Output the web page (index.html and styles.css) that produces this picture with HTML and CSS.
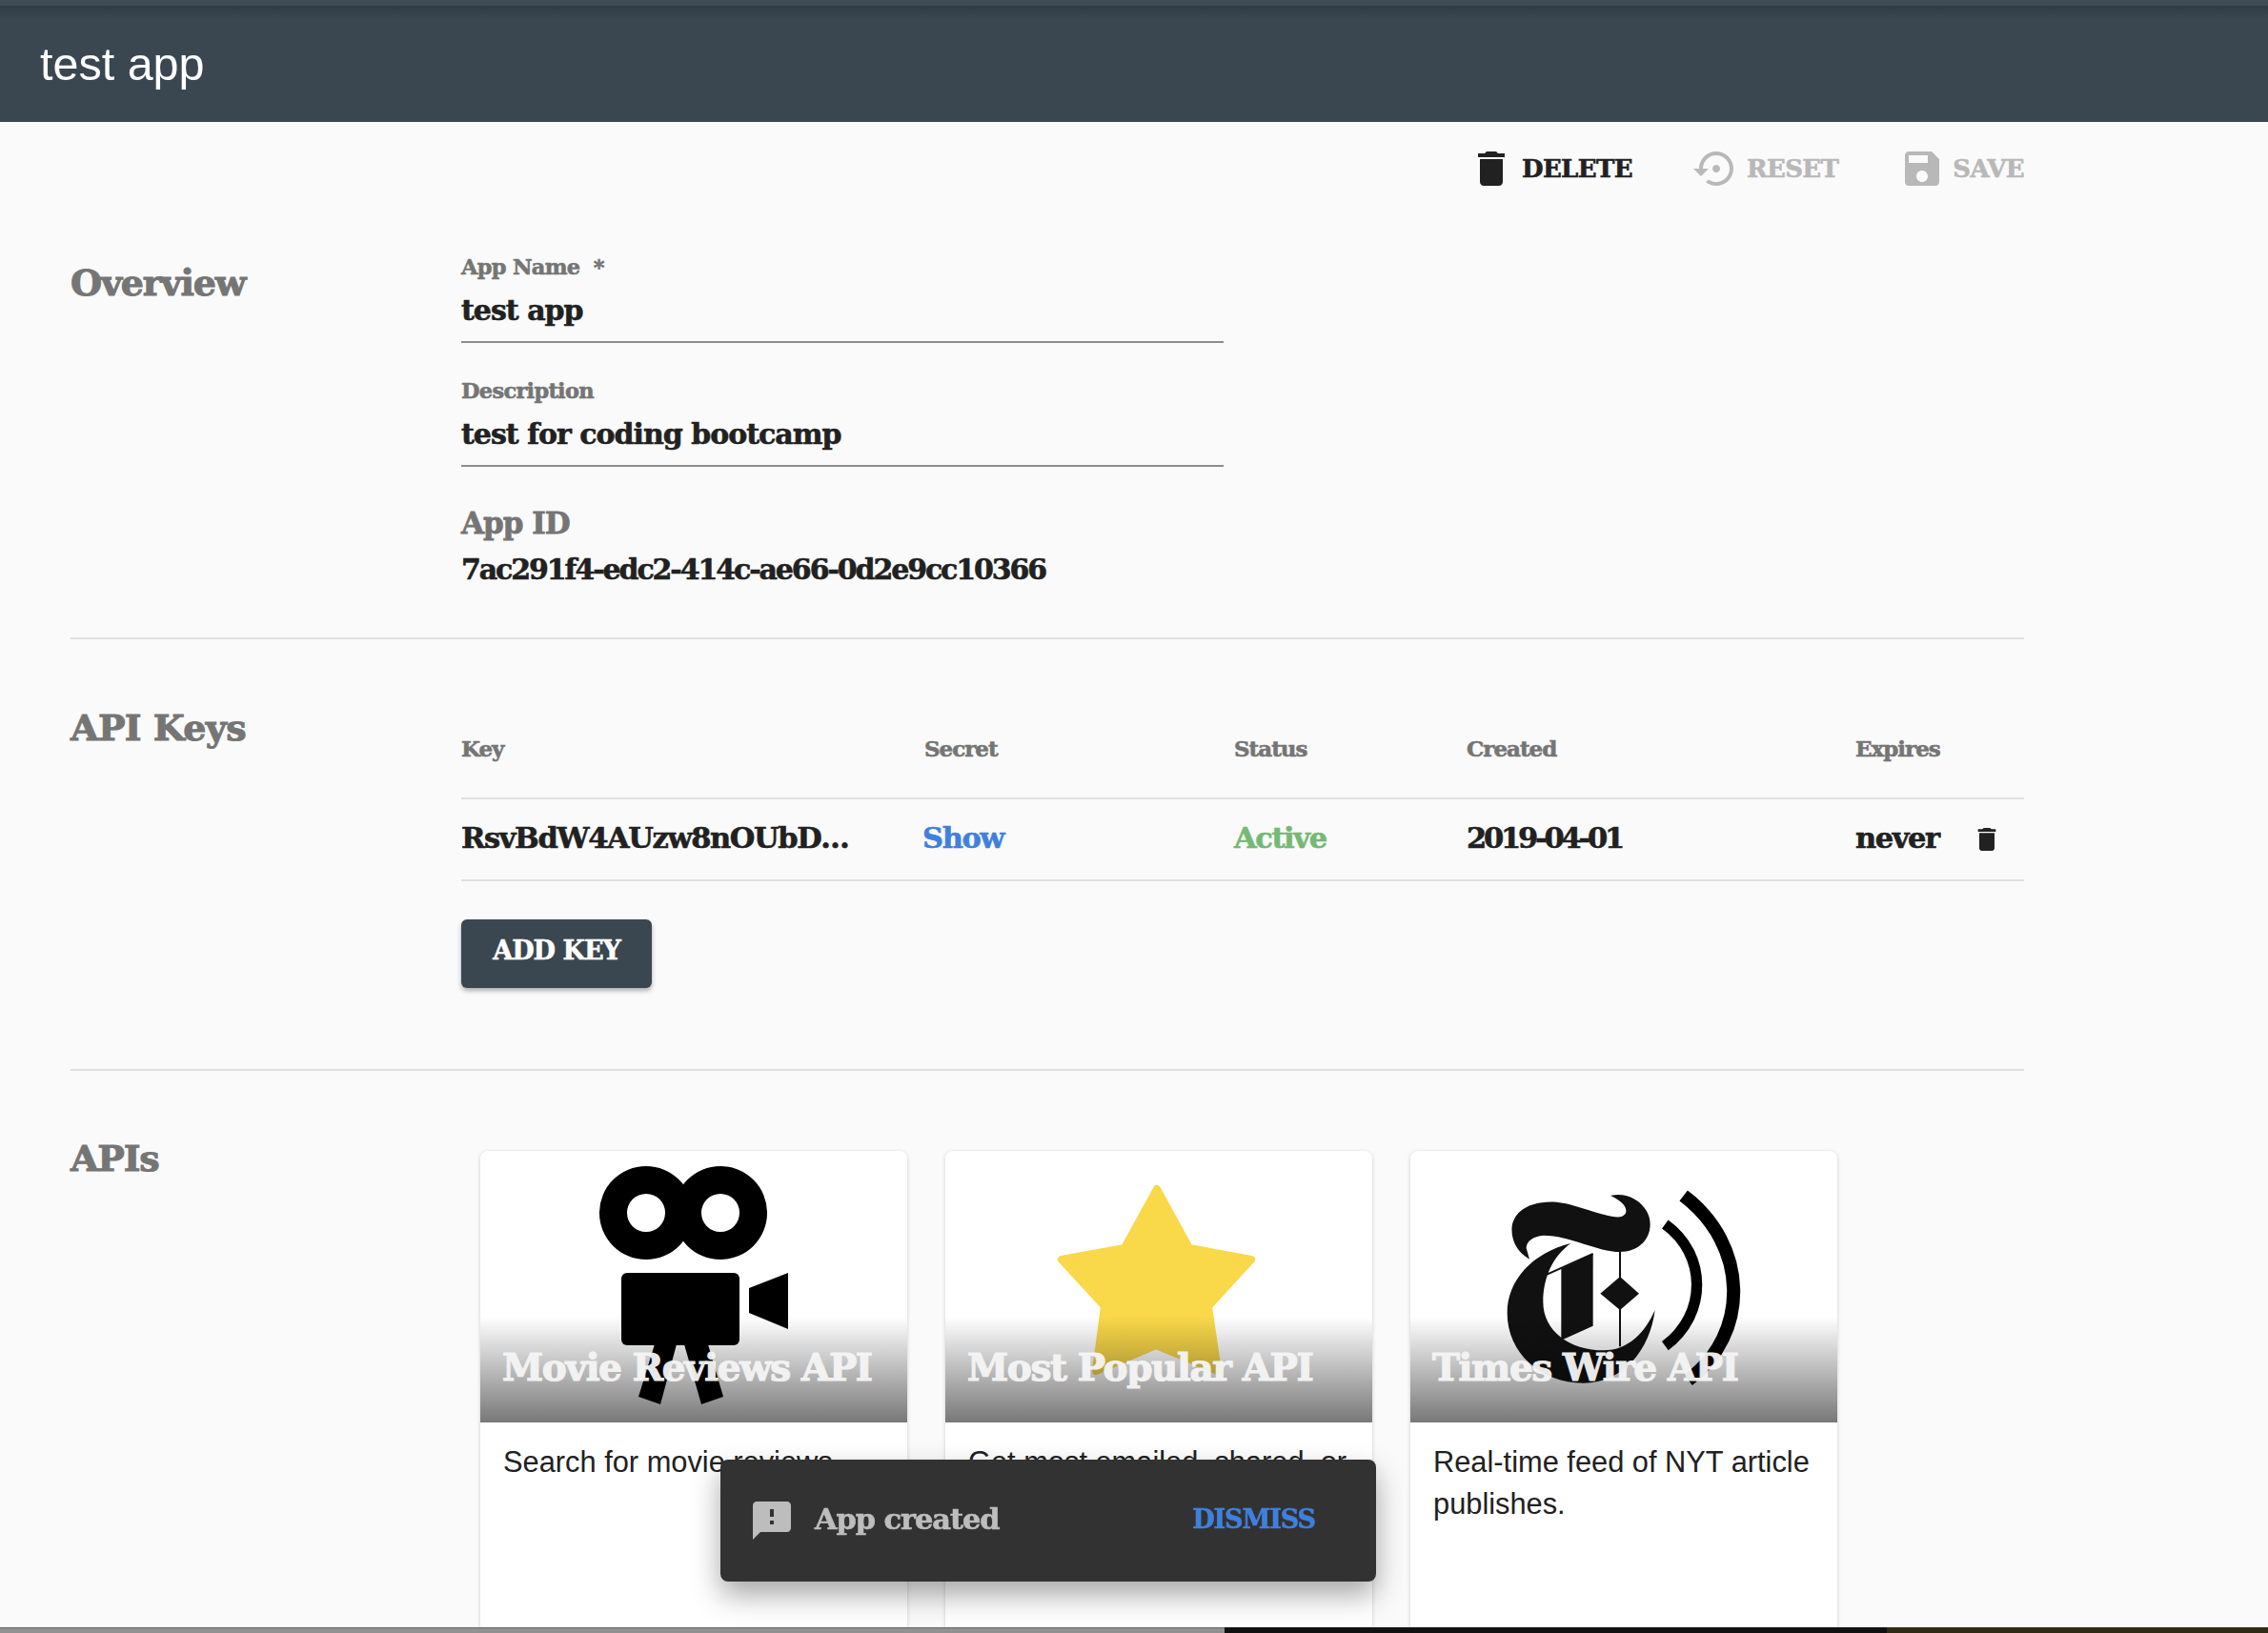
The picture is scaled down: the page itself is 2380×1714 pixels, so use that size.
FILE: index.html
```html
<!DOCTYPE html>
<html lang="en">
<head>
  <meta charset="UTF-8">
  <title>test app</title>
  <link rel="stylesheet" href="styles.css">
</head>
<body>
  <header class="app-bar">test app</header>

  <main class="content">
    <div class="toolbar">
      <button class="tool-btn">
        <svg class="icon" viewBox="0 0 24 24"><path d="M6 19c0 1.1.9 2 2 2h8c1.1 0 2-.9 2-2V7H6v12zM19 4h-3.5l-1-1h-5l-1 1H5v2h14V4z"/></svg>
        DELETE
      </button>
      <button class="tool-btn disabled">
        <svg class="icon" viewBox="0 0 24 24"><path d="M14 12c0-1.1-.9-2-2-2s-2 .9-2 2 .9 2 2 2 2-.9 2-2zm-2-9c-4.97 0-9 4.03-9 9H0l4 4 4-4H5c0-3.87 3.13-7 7-7s7 3.13 7 7-3.13 7-7 7c-1.51 0-2.91-.49-4.06-1.3l-1.42 1.44C8.04 20.3 9.94 21 12 21c4.97 0 9-4.03 9-9s-4.03-9-9-9z"/></svg>
        RESET
      </button>
      <button class="tool-btn disabled">
        <svg class="icon" viewBox="0 0 24 24"><path d="M17 3H5c-1.11 0-2 .9-2 2v14c0 1.1.89 2 2 2h14c1.1 0 2-.9 2-2V7l-4-4zm-5 16c-1.66 0-3-1.34-3-3s1.34-3 3-3 3 1.34 3 3-1.34 3-3 3zm3-10H5V5h10v4z"/></svg>
        SAVE
      </button>
    </div>

    <section class="section overview">
      <h2 class="section-title">Overview</h2>
      <div class="fields">
        <div class="field">
          <div class="field-label">App Name &nbsp;*</div>
          <div class="field-value">test app</div>
        </div>
        <div class="field">
          <div class="field-label">Description</div>
          <div class="field-value">test for coding bootcamp</div>
        </div>
        <div class="app-id">
          <div class="app-id-label">App ID</div>
          <div class="app-id-value">7ac291f4-edc2-414c-ae66-0d2e9cc10366</div>
        </div>
      </div>
    </section>

    <section class="section keys">
      <h2 class="section-title">API Keys</h2>
      <div>
        <div class="key-row key-head">
          <span>Key</span><span>Secret</span><span>Status</span><span>Created</span><span>Expires</span>
        </div>
        <div class="key-row key-body">
          <span>RsvBdW4AUzw8nOUbD…</span>
          <span class="link">Show</span>
          <span class="active">Active</span>
          <span class="date">2019-04-01</span>
          <span class="expires">never
            <svg class="icon-small" viewBox="0 0 24 24"><path d="M6 19c0 1.1.9 2 2 2h8c1.1 0 2-.9 2-2V7H6v12zM19 4h-3.5l-1-1h-5l-1 1H5v2h14V4z"/></svg>
          </span>
        </div>
        <button class="add-key">ADD KEY</button>
      </div>
    </section>

    <section class="section apis">
      <h2 class="section-title">APIs</h2>
      <div class="cards">
        <article class="card">
          <div class="card-image">
            <svg viewBox="0 0 448 285">
              <path fill-rule="evenodd" d="M174 16a49 49 0 1 0 0 98a49 49 0 1 0 0-98zM174 45a20 20 0 1 1 0 40a20 20 0 1 1 0-40z"/>
              <path fill-rule="evenodd" d="M252 16a49 49 0 1 0 0 98a49 49 0 1 0 0-98zM252 45a20 20 0 1 1 0 40a20 20 0 1 1 0-40z"/>
              <rect x="148" y="128" width="124" height="76" rx="6"/>
              <path d="M282 144L323 128V187L282 170Z"/>
              <path d="M183 203H206L189 266L166 258Z"/>
              <path d="M214 203H239L255 258L232 266Z"/>
            </svg>
            <h3 class="card-title">Movie Reviews API</h3>
          </div>
          <p class="card-text">Search for movie reviews.</p>
        </article>
        <article class="card">
          <div class="card-image">
            <svg viewBox="0 0 448 285">
              <path class="star" d="M222 40L256 102L321 114L276 163L286 231L221 204L158 231L167 163L122 114L188 102Z"/>
            </svg>
            <h3 class="card-title">Most Popular API</h3>
          </div>
          <p class="card-text">Get most emailed, shared, or viewed articles.</p>
        </article>
        <article class="card">
          <div class="card-image">
            <svg viewBox="30 54 1344 855">
              <g fill="#111">
                <path d="M405 395C370 375 345 340 350 290C360 235 420 210 490 215C560 222 640 265 690 262C715 258 725 225 660 195C720 180 785 225 785 285C785 340 740 372 690 372C620 372 530 320 450 320C415 322 395 340 395 360Z"/>
                <path d="M535 345C415 375 335 460 335 565C335 690 440 785 575 785C700 785 785 680 800 555C770 625 715 682 640 682C530 682 448 620 448 530C448 450 480 385 535 345Z"/>
                <path d="M505 425L605 378V605L505 650Z"/>
                <path d="M690 450L750 503L690 555L628 503Z"/>
                <path d="M455 445L605 378M690 372V670" stroke="#111" stroke-width="6"/>
              </g>
              <path d="M832 285C965 380 965 570 832 668" fill="none" stroke="#000" stroke-width="34"/>
              <path d="M890 195C1095 350 1100 630 905 775" fill="none" stroke="#000" stroke-width="42"/>
            </svg>
            <h3 class="card-title">Times Wire API</h3>
          </div>
          <p class="card-text">Real-time feed of NYT article publishes.</p>
        </article>
      </div>
    </section>
  </main>

  <div class="toast">
    <svg class="icon" viewBox="0 0 24 24"><path d="M20 2H4c-1.1 0-1.99.9-1.99 2L2 22l4-4h14c1.1 0 2-.9 2-2V4c0-1.1-.9-2-2-2zm-7 12h-2v-2h2v2zm0-4h-2V6h2v4z"/></svg>
    <span class="toast-text">App created</span>
    <span class="toast-action">DISMISS</span>
  </div>

  <div class="desktop-strip"><span class="strip-light"></span><span class="strip-dark"></span><span class="strip-olive"></span></div>
</body>
</html>
```

FILE: styles.css
```css
html, body {
  margin: 0;
  height: 1714px;
  overflow: hidden;
}

body {
  background: #fafafa;
  color: #212121;
  font-family: 'DejaVu Serif', serif;
  font-weight: bold;
  -webkit-text-stroke: .6px currentColor;
}

.app-bar {
  height: 122px;
  border-top: 6px solid #3f4c56;
  padding-left: 42px;
  background: linear-gradient(#323c44, #3a4750 14px);
  color: #fff;
  font-family: 'Liberation Sans', sans-serif;
  font-weight: normal;
  font-size: 48.5px;
  line-height: 122px;
  -webkit-text-stroke: 0;
}

.content {
  width: 2050px;
  margin-left: 74px;
}

.toolbar {
  display: flex;
  justify-content: flex-end;
  gap: 64px;
  height: 98px;
  padding-top: 25px;
  box-sizing: border-box;
}

.tool-btn {
  display: flex;
  align-items: center;
  gap: 8px;
  height: 48px;
  padding: 0;
  border: none;
  background: none;
  color: #212121;
  font-family: inherit;
  font-weight: bold;
  font-size: 26px;
  letter-spacing: -.6px;
  -webkit-text-stroke: .6px currentColor;
}

.tool-btn.disabled {
  color: #b8b8b8;
}

.icon {
  width: 48px;
  height: 48px;
  fill: currentColor;
  flex: none;
  stroke-width: 0;
}

.section {
  display: grid;
  grid-template-columns: 410px 1fr;
  border-bottom: 2px solid #e0e0e0;
}

.section-title {
  margin: 0;
  color: #757575;
  font-size: 38px;
  letter-spacing: -1.2px;
  line-height: 44px;
  -webkit-text-stroke: 1px currentColor;
}

.overview {
  height: 445px;
  box-sizing: border-box;
}

.overview .section-title {
  margin-top: 49px;
}

.fields {
  width: 800px;
  padding-top: 39px;
}

.field {
  height: 95px;
  box-sizing: border-box;
  border-bottom: 2px solid #8c8c8c;
  margin-bottom: 35px;
}

.field-label {
  color: #757575;
  font-size: 22.5px;
  line-height: 30px;
  letter-spacing: -.7px;
}

.field-value {
  font-size: 30px;
  line-height: 40px;
  letter-spacing: -1px;
  margin-top: 11px;
}

.app-id {
  padding-top: 4px;
}

.app-id-label {
  color: #757575;
  font-size: 31px;
  line-height: 40px;
  letter-spacing: -1px;
  -webkit-text-stroke: .8px currentColor;
}

.app-id-value {
  font-size: 30px;
  line-height: 40px;
  letter-spacing: -2.1px;
  margin-top: 9px;
}

.keys {
  height: 453px;
  box-sizing: border-box;
}

.keys .section-title {
  margin-top: 71px;
  letter-spacing: -.6px;
}

.key-row {
  display: grid;
  grid-template-columns: 486px 325px 244px 408px 1fr;
  align-items: center;
  border-bottom: 2px solid #e0e0e0;
}

.key-head {
  height: 168px;
  box-sizing: border-box;
  padding-top: 62px;
  color: #757575;
  font-size: 23px;
  letter-spacing: -1px;
}

.key-body {
  height: 86px;
  padding-bottom: 5px;
  box-sizing: border-box;
  font-size: 30.5px;
  letter-spacing: -1.4px;
}

.link {
  color: #3f80dd;
  margin-left: -2px;
}

.active {
  color: #74b974;
}

.date {
  letter-spacing: -3.2px;
}

.expires {
  display: flex;
  align-items: center;
  gap: 34px;
}

.icon-small {
  width: 32px;
  height: 32px;
  fill: currentColor;
  margin-top: 4px;
}

.add-key {
  display: block;
  width: 200px;
  height: 72px;
  margin-top: 40px;
  padding: 0 0 8px;
  border: none;
  border-radius: 6px;
  background: #3a4750;
  color: #fff;
  font-family: inherit;
  font-weight: bold;
  font-size: 27px;
  letter-spacing: -1px;
  -webkit-text-stroke: .6px currentColor;
  box-shadow: 0 3px 5px rgba(0, 0, 0, .3);
}

.apis {
  border-bottom: none;
}

.apis .section-title {
  margin-top: 70px;
}

.cards {
  display: flex;
  gap: 40px;
  padding: 84px 0 0 20px;
}

.card {
  width: 448px;
  height: 505px;
  flex: none;
  background: #fff;
  border-radius: 8px 8px 0 0;
  box-shadow: 0 1px 4px rgba(0, 0, 0, .18);
  overflow: hidden;
}

.card-image {
  position: relative;
  height: 285px;
}

.card-image svg {
  display: block;
  width: 448px;
  height: 285px;
}

.card-image::after {
  content: "";
  position: absolute;
  left: 0;
  right: 0;
  bottom: 0;
  height: 111px;
  background: linear-gradient(rgba(0, 0, 0, 0), rgba(0, 0, 0, .53));
}

.star {
  fill: #f9d849;
  stroke: #f9d849;
  stroke-width: 8;
  stroke-linejoin: round;
}

.card-title {
  position: absolute;
  z-index: 1;
  left: 23px;
  bottom: 33px;
  margin: 0;
  color: #f5f5f5;
  opacity: .95;
  font-size: 39px;
  line-height: 50px;
  letter-spacing: -1.4px;
  -webkit-text-stroke: 1.2px #f5f5f5;
  white-space: nowrap;
}

.card-text {
  margin: 0;
  padding: 20px 24px;
  color: #212121;
  font-family: 'Liberation Sans', sans-serif;
  font-weight: normal;
  font-size: 30.8px;
  line-height: 44px;
  -webkit-text-stroke: 0;
}

.toast {
  position: fixed;
  left: 756px;
  top: 1532px;
  width: 688px;
  height: 128px;
  box-sizing: border-box;
  display: flex;
  align-items: center;
  padding: 0 64px 4px 30px;
  background: #323232;
  border-radius: 8px;
  box-shadow: 0 14px 30px rgba(0, 0, 0, .35);
  color: #bdbdbd;
  font-size: 30.5px;
  letter-spacing: -1.1px;
}

.toast .icon {
  margin-top: 4px;
}

.toast-text {
  margin-left: 21px;
  flex: 1;
}

.toast-action {
  color: #3f80dd;
  font-size: 27px;
}

.desktop-strip {
  position: fixed;
  left: 0;
  right: 0;
  bottom: 0;
  height: 6px;
  display: flex;
}

.strip-light {
  width: 1285px;
  background: #919191;
  border-top: 1px solid #666;
}

.strip-dark {
  width: 695px;
  background: #111;
}

.strip-olive {
  flex: 1;
  background: #2e2a14;
}
```
